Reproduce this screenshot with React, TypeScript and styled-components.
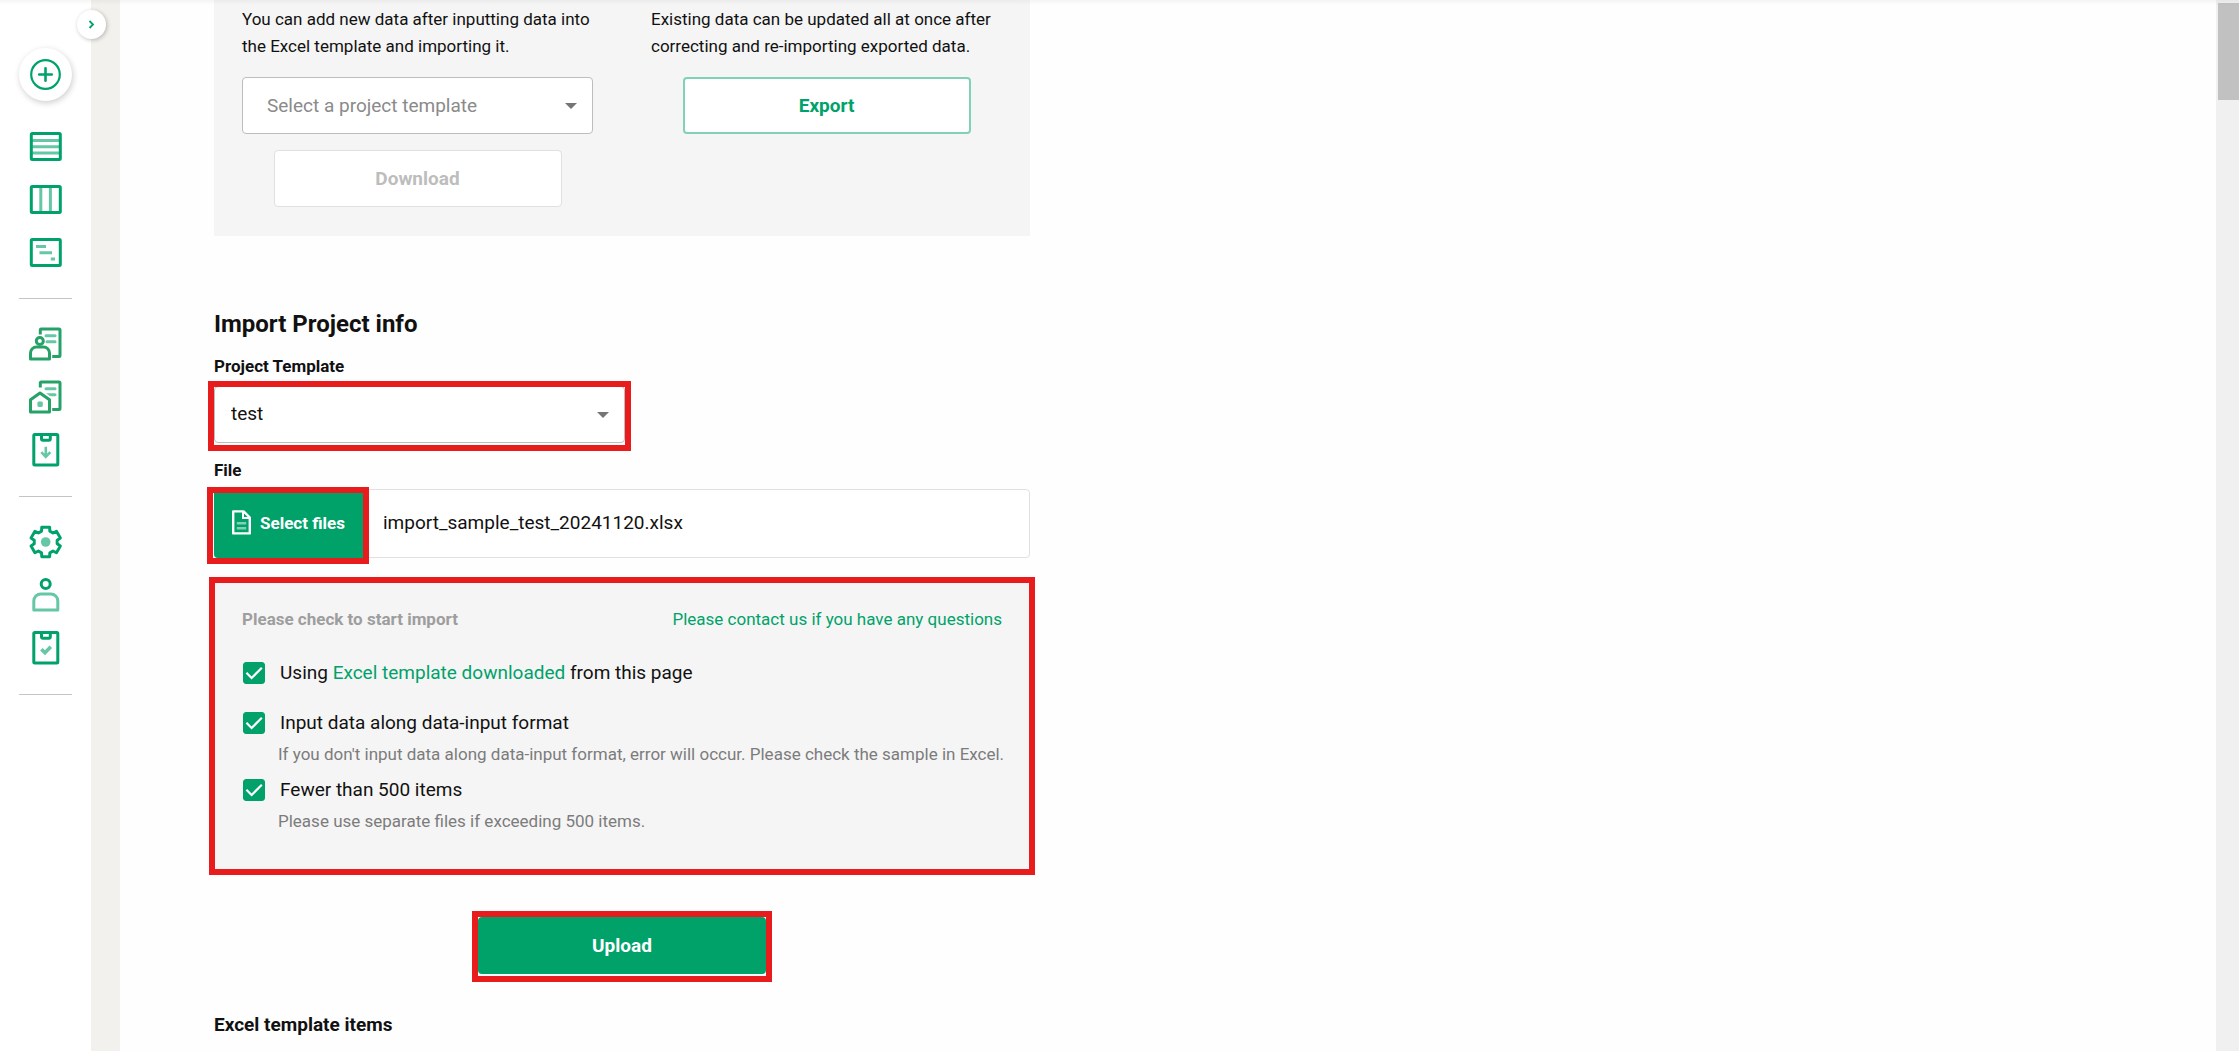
import React from 'react';
import styled, { createGlobalStyle } from 'styled-components';

const green = '#00a26a';
const lightGreen = '#66c7a6';
const red = '#e81c1c';

const GlobalStyle = createGlobalStyle`
  *, *::before, *::after { box-sizing: border-box; }
  body {
    margin: 0;
    background: #fefefe;
    color: #111;
    font-family: Roboto, "Liberation Sans", sans-serif;
    font-size: 17px;
    line-height: 24px;
  }
  button, select, input { font: inherit; color: inherit; }
  p, h2, h3, ul { margin: 0; padding: 0; font-weight: 400; }
  a { color: ${green}; text-decoration: none; }
`;

const Page = styled.div`
  position: relative;
  display: flex;
  min-height: 100vh;
`;

const TopShade = styled.div`
  position: absolute;
  inset: 0 0 auto 0;
  height: 5px;
  background: linear-gradient(rgba(0, 0, 0, 0.04), rgba(0, 0, 0, 0));
  pointer-events: none;
`;

const Sidebar = styled.nav`
  position: relative;
  flex: 0 0 91px;
  display: flex;
  flex-direction: column;
  align-items: center;
  padding-top: 48px;
  background: #fff;
`;

const Gutter = styled.div`
  flex: 0 0 29px;
  background: #f3f1ed;
`;

const RoundButton = styled.button`
  display: grid;
  place-items: center;
  width: 53px;
  height: 53px;
  margin-bottom: 19px;
  padding: 0;
  border: 0;
  border-radius: 50%;
  background: #fff;
  box-shadow: 1px 2px 6px rgba(0, 0, 0, 0.2);
`;

const CollapseButton = styled.button`
  position: absolute;
  top: 10px;
  right: -15px;
  z-index: 1;
  display: grid;
  place-items: center;
  width: 29px;
  height: 29px;
  padding: 0;
  border: 0;
  border-radius: 50%;
  background: #fff;
  box-shadow: 1px 1px 4px rgba(0, 0, 0, 0.25);
`;

const NavGroup = styled.ul`
  width: 53px;
  padding-bottom: 19px;
  margin-bottom: 19px;
  border-bottom: 1px solid #c4c4c4;
  list-style: none;
`;

const NavLink = styled.a`
  display: grid;
  place-items: center;
  height: 53px;
`;

const Main = styled.main`
  flex: 1;
  min-width: 0;
  padding: 0 94px;
`;

const Content = styled.div`
  display: flex;
  flex-direction: column;
  max-width: 816px;
`;

const TransferPanel = styled.section`
  display: grid;
  grid-template-columns: 1fr 1fr;
  column-gap: 58px;
  padding: 6px 28px 29px;
  background: #f5f5f5;
`;

const TransferColumn = styled.div`
  display: flex;
  flex-direction: column;
  align-items: center;
  gap: 16px;
`;

const Description = styled.p`
  align-self: stretch;
  padding-bottom: 1px;
  line-height: 27px;
`;

const ActionButton = styled.button<{ $kind: 'primary' | 'outline' | 'disabled' }>`
  width: 288px;
  height: 57px;
  padding: 0;
  border-radius: 4px;
  font-size: 19px;
  font-weight: 700;
  line-height: 28px;
  background: ${(p) => (p.$kind === 'primary' ? green : '#fff')};
  color: ${(p) => (p.$kind === 'primary' ? '#fff' : p.$kind === 'outline' ? green : '#bdbdbd')};
  border: ${(p) =>
    p.$kind === 'primary' ? '0' : p.$kind === 'outline' ? '2px solid #80d1b5' : '1px solid #e0e0e0'};
`;

const SelectBox = styled.div`
  position: relative;
  align-self: stretch;
`;

const NativeSelect = styled.select<{ $placeholder?: boolean }>`
  display: block;
  width: 100%;
  height: 57px;
  padding: ${(p) => (p.$placeholder ? '0 40px 0 24px' : '0 40px 2px 16px')};
  border: 1px solid #bdbdbd;
  border-radius: 4px;
  background: #fff;
  color: ${(p) => (p.$placeholder ? '#8a8a8a' : '#111')};
  font-size: 19px;
  appearance: none;
`;

const Arrow = styled.svg`
  position: absolute;
  top: 26px;
  right: 16px;
  pointer-events: none;
`;

const Highlight = styled.div<{ $inset: string; $width?: string }>`
  position: relative;
  width: ${(p) => p.$width ?? 'auto'};
  max-width: 100%;

  &::after {
    content: '';
    position: absolute;
    z-index: 1;
    inset: ${(p) => p.$inset};
    border: 6px solid ${red};
    pointer-events: none;
  }
`;

const Title = styled.h2`
  margin: 72px 0 14px;
  font-size: 24px;
  font-weight: 700;
  line-height: 32px;
`;

const FieldLabel = styled.label`
  margin-bottom: 8px;
  font-weight: 700;
`;

const FileLabel = styled(FieldLabel)`
  margin: 15px 0 7px;
`;

const FileBox = styled.div`
  display: flex;
  height: 69px;
  margin-bottom: 21px;
  border: 1px solid #e0e0e0;
  border-radius: 4px;
  background: #fff;
`;

const FileHighlight = styled(Highlight)`
  display: flex;
  margin: -1px 0 -1px -1px;
`;

const FileButton = styled.button`
  display: flex;
  align-items: center;
  justify-content: center;
  gap: 9px;
  width: 149px;
  padding: 0 0 2px;
  border: 0;
  border-radius: 4px 0 0 4px;
  background: ${green};
  color: #fff;
  font-weight: 700;
`;

const FileName = styled.output`
  align-self: center;
  padding: 0 0 2px 20px;
  font-size: 19px;
`;

const CheckPanel = styled.section`
  padding: 28px 28px 37px;
  background: #f5f5f5;
`;

const CheckHeader = styled.div`
  display: flex;
  justify-content: space-between;
  margin-bottom: 28px;
`;

const CheckTitle = styled.h3`
  color: #9e9e9e;
  font-size: 17px;
  font-weight: 700;
`;

const CheckItem = styled.div<{ $gap: number }>`
  margin-bottom: ${(p) => p.$gap}px;
`;

const CheckLabel = styled.label`
  display: flex;
  align-items: center;
  gap: 15px;
  font-size: 19px;
  line-height: 28px;
`;

const Tick = styled.span`
  position: relative;
  display: block;
  width: 22px;
  height: 22px;
  margin-left: 1px;

  svg {
    position: absolute;
    inset: 0;
    pointer-events: none;
  }
`;

const TickInput = styled.input`
  display: block;
  width: 22px;
  height: 22px;
  margin: 0;
  border: 1px solid ${green};
  border-radius: 3px;
  appearance: none;

  &:checked { background: ${green}; }
`;

const CheckNote = styled.p`
  margin: 5px -28px 0 0;
  padding-left: 36px;
  color: #7c7c7c;
`;

const UploadRow = styled.div`
  display: flex;
  justify-content: center;
  margin: 47px 0 37px;
`;

const UploadHighlight = styled(Highlight)`
  display: flex;
`;

const SubTitle = styled.h3`
  font-size: 19px;
  font-weight: 700;
  line-height: 28px;
`;

const ScrollTrack = styled.div`
  flex: 0 0 23px;
  padding: 3px 0 0 2px;
  background: #f0f0f0;
`;

const ScrollThumb = styled.div`
  height: 97px;
  background: #c1c1c1;
`;

function Icon({ children, color = green }: { children: React.ReactNode; color?: string }) {
  return (
    <svg width="37" height="37" viewBox="0 0 37 37" fill="none" stroke={color} strokeWidth="3" aria-hidden="true">
      {children}
    </svg>
  );
}

const frame = <rect x="4.3" y="5.5" width="29" height="26" rx="1" />;

const sheet = (
  <>
    <path d="M13.3 8.5V4a1 1 0 0 1 1-1H32a1 1 0 0 1 1 1V29.5a1 1 0 0 1-1 1H25.2" />
    <g stroke={lightGreen} strokeLinecap="round">
      <path d="M19 9.8H28" />
      <path d="M20 15.8H28" />
    </g>
  </>
);

const clipboard = (
  <>
    <rect x="6.8" y="2.5" width="24" height="30.5" rx="1" />
    <path d="M14.5 3v3.7a1.5 1.5 0 0 0 1.5 1.5h5.8a1.5 1.5 0 0 0 1.5-1.5V3" />
  </>
);

const RowsIcon = () => (
  <Icon>
    <path stroke={lightGreen} d="M5 12.5H32.5M5 18.8H32.5M5 25H32.5" />
    {frame}
  </Icon>
);

const ColumnsIcon = () => (
  <Icon>
    <path stroke={lightGreen} d="M13.8 6.5V30.5M23.4 6.5V30.5" />
    {frame}
  </Icon>
);

const GanttIcon = () => (
  <Icon>
    {frame}
    <path stroke={lightGreen} d="M9 12.5H19M12.5 18.8H25M23.8 25H28" />
  </Icon>
);

const PersonSheetIcon = () => (
  <Icon color="#26a269">
    {sheet}
    <circle cx="12.8" cy="15" r="3.5" fill="#fff" />
    <path fill="#fff" strokeLinejoin="round" d="M3.5 33V27a6 6 0 0 1 6-6h7a6 6 0 0 1 6 6v6z" />
  </Icon>
);

const HouseSheetIcon = () => (
  <Icon color="#26a269">
    {sheet}
    <path stroke="#fff" strokeWidth="6" d="M3.5 20.5 13 13.5 22.5 20.5" />
    <path fill="#fff" strokeLinejoin="round" d="M3.5 33V20.8L13 14 22.5 20.8V33z" />
    <rect x="10.4" y="22.6" width="5.4" height="5.4" rx="1.4" fill={lightGreen} stroke="none" />
  </Icon>
);

const ClipboardDownIcon = () => (
  <Icon>
    {clipboard}
    <path stroke={lightGreen} strokeWidth="2.6" d="M18.8 14.7V25M14.3 20.2l4.5 4.6 4.5-4.6" />
  </Icon>
);

const ClipboardCheckIcon = () => (
  <Icon>
    {clipboard}
    <path stroke={lightGreen} strokeWidth="3.6" d="M14.4 19.2l3.6 3.6 5.8-6" />
  </Icon>
);

const gearPath = [0, 60, 120, 180, 240, 300]
  .flatMap((a) => [
    [11.6, a - 21],
    [15.2, a - 15],
    [15.2, a + 15],
    [11.6, a + 21],
  ])
  .map(([r, deg], i) => {
    const t = ((deg - 90) * Math.PI) / 180;
    return `${i ? 'L' : 'M'}${(18.7 + r * Math.cos(t)).toFixed(2)} ${(18 + r * Math.sin(t)).toFixed(2)}`;
  })
  .join('');

const GearIcon = () => (
  <Icon>
    <path d={`${gearPath}Z`} strokeLinejoin="round" />
    <circle cx="18.7" cy="18" r="4.8" fill={lightGreen} stroke="none" />
  </Icon>
);

const UserIcon = () => (
  <Icon>
    <circle cx="18.7" cy="7" r="4.5" />
    <path stroke={lightGreen} strokeLinejoin="round" d="M6.8 33V24a7 7 0 0 1 7-7h10a7 7 0 0 1 7 7v9z" />
  </Icon>
);

const navGroups = [
  [
    { label: 'List', Glyph: RowsIcon },
    { label: 'Board', Glyph: ColumnsIcon },
    { label: 'Schedule', Glyph: GanttIcon },
  ],
  [
    { label: 'Customers', Glyph: PersonSheetIcon },
    { label: 'Properties', Glyph: HouseSheetIcon },
    { label: 'Import', Glyph: ClipboardDownIcon },
  ],
  [
    { label: 'Settings', Glyph: GearIcon },
    { label: 'Account', Glyph: UserIcon },
    { label: 'Tasks', Glyph: ClipboardCheckIcon },
  ],
];

const SelectArrow = () => (
  <Arrow width="12" height="6" viewBox="0 0 12 6" aria-hidden="true">
    <path d="M0 0H12L6 6z" fill="#757575" />
  </Arrow>
);

function Check({
  id,
  note,
  gap = 0,
  children,
}: {
  id: string;
  note?: string;
  gap?: number;
  children: React.ReactNode;
}) {
  return (
    <CheckItem $gap={gap}>
      <CheckLabel htmlFor={id}>
        <Tick>
          <TickInput id={id} type="checkbox" defaultChecked />
          <svg width="22" height="22" viewBox="0 0 22 22" fill="none" stroke="#fff" strokeWidth="2.2" aria-hidden="true">
            <path d="M3.4 10.8l5.2 5.2L18.8 5.8" />
          </svg>
        </Tick>
        <span>{children}</span>
      </CheckLabel>
      {note && <CheckNote>{note}</CheckNote>}
    </CheckItem>
  );
}

export default function App() {
  return (
    <>
      <GlobalStyle />
      <Page>
        <Sidebar>
          <CollapseButton aria-label="Expand menu">
            <svg width="7" height="9" viewBox="0 0 7 9" fill="none" stroke={green} strokeWidth="1.8" aria-hidden="true">
              <path d="M1.5 1L5 4.5 1.5 8" />
            </svg>
          </CollapseButton>
          <RoundButton aria-label="Add">
            <svg width="31" height="31" viewBox="0 0 31 31" fill="none" stroke={green} strokeWidth="2.2" aria-hidden="true">
              <circle cx="15.5" cy="15.5" r="14.3" />
              <path d="M15.5 9.2V21.8M9.2 15.5H21.8" strokeWidth="2.6" strokeLinecap="round" />
            </svg>
          </RoundButton>
          {navGroups.map((group, i) => (
            <NavGroup key={i}>
              {group.map(({ label, Glyph }) => (
                <li key={label}>
                  <NavLink href="#" aria-label={label}>
                    <Glyph />
                  </NavLink>
                </li>
              ))}
            </NavGroup>
          ))}
        </Sidebar>
        <Gutter />
        <Main>
          <Content>
            <TransferPanel>
              <TransferColumn>
                <Description>
                  You can add new data after inputting data into the Excel template and importing it.
                </Description>
                <SelectBox>
                  <NativeSelect $placeholder aria-label="Select a project template">
                    <option>Select a project template</option>
                  </NativeSelect>
                  <SelectArrow />
                </SelectBox>
                <ActionButton $kind="disabled" disabled>
                  Download
                </ActionButton>
              </TransferColumn>
              <TransferColumn>
                <Description>
                  Existing data can be updated all at once after correcting and re-importing exported data.
                </Description>
                <ActionButton $kind="outline">Export</ActionButton>
              </TransferColumn>
            </TransferPanel>

            <Title>Import Project info</Title>
            <FieldLabel htmlFor="template">Project Template</FieldLabel>
            <Highlight $inset="-5px -6px -8px -6px" $width="411px">
              <SelectBox>
                <NativeSelect id="template">
                  <option>test</option>
                </NativeSelect>
                <SelectArrow />
              </SelectBox>
            </Highlight>

            <FileLabel htmlFor="file">File</FileLabel>
            <FileBox>
              <FileHighlight $inset="-2px -6px -6px -7px">
                <FileButton id="file">
                  <svg width="19" height="25" viewBox="0 0 19 25" fill="none" stroke="#fff" strokeWidth="2.4" aria-hidden="true">
                    <path strokeLinejoin="round" d="M1.2 1.4H11.6L17.8 7.6V23.4H1.2z" />
                    <path fill="#fff" stroke="none" d="M10 1V9H18.4L12 1z" />
                    <path stroke="none" fill={green} d="M12 3.4V7H15.6z" />
                    <path stroke="#80d1b5" d="M4.8 13.2H14.2M4.8 18.2H14.2" />
                  </svg>
                  Select files
                </FileButton>
              </FileHighlight>
              <FileName htmlFor="file">import_sample_test_20241120.xlsx</FileName>
            </FileBox>

            <Highlight $inset="-2px -5px -5px -5px">
              <CheckPanel>
                <CheckHeader>
                  <CheckTitle>Please check to start import</CheckTitle>
                  <a href="#">Please contact us if you have any questions</a>
                </CheckHeader>
                <Check id="check-template" gap={22}>
                  Using <a href="#">Excel template downloaded</a> from this page
                </Check>
                <Check
                  id="check-format"
                  gap={10}
                  note="If you don't input data along data-input format, error will occur. Please check the sample in Excel."
                >
                  Input data along data-input format
                </Check>
                <Check id="check-count" note="Please use separate files if exceeding 500 items.">
                  Fewer than 500 items
                </Check>
              </CheckPanel>
            </Highlight>

            <UploadRow>
              <UploadHighlight $inset="-6px -6px -8px -6px">
                <ActionButton $kind="primary">Upload</ActionButton>
              </UploadHighlight>
            </UploadRow>

            <SubTitle>Excel template items</SubTitle>
          </Content>
        </Main>
        <ScrollTrack>
          <ScrollThumb />
        </ScrollTrack>
        <TopShade />
      </Page>
    </>
  );
}
